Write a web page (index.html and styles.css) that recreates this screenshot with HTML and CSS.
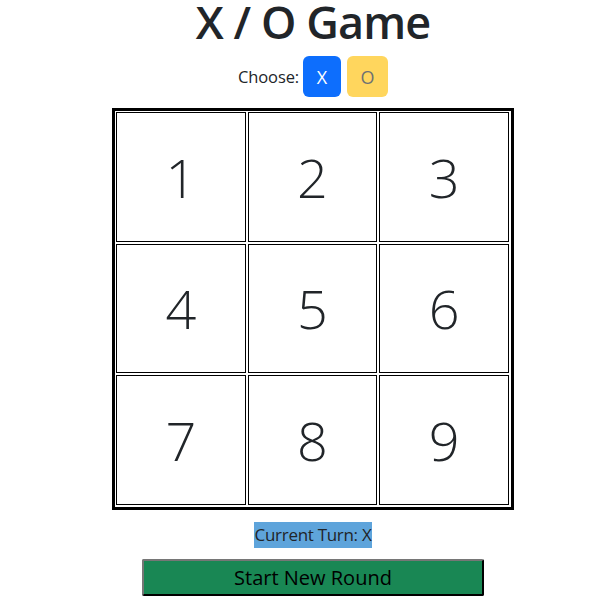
FILE: index.html
```html
<!DOCTYPE html>
<html lang="en">
<head>
<meta charset="utf-8">
<title>X / O Game</title>
<link rel="stylesheet" href="styles.css">
</head>
<body>
<main class="game">
  <h1 class="title">X / O Game</h1>
  <div class="choose">
    <span class="choose-label">Choose:</span>
    <button class="pick pick-x">X</button>
    <button class="pick pick-o" disabled>O</button>
  </div>
  <div class="board">
    <div class="cell">1</div>
    <div class="cell">2</div>
    <div class="cell">3</div>
    <div class="cell">4</div>
    <div class="cell">5</div>
    <div class="cell">6</div>
    <div class="cell">7</div>
    <div class="cell">8</div>
    <div class="cell">9</div>
  </div>
  <div class="turn"><span class="turn-text">Current Turn: X</span></div>
  <button class="restart">Start New Round</button>
</main>
</body>
</html>
```
FILE: styles.css
```css
html, body {
  margin: 0;
  padding: 0;
  background: #fff;
}
body {
  font-family: "Open Sans", "Noto Sans", sans-serif;
  color: #212529;
}
.game {
  display: flex;
  flex-direction: column;
  align-items: center;
  padding-left: 10px;
}
.title {
  margin: -3px 0 0;
  font-size: 45px;
  font-weight: 600;
  line-height: 50px;
  letter-spacing: -0.9px;
}
.choose {
  margin-top: 9px;
  display: flex;
  align-items: center;
  gap: 5px;
  font-size: 16.5px;
}
.choose-label {
  letter-spacing: -0.1px;
  margin-right: -1px;
}
.pick {
  font-family: inherit;
  font-size: 18px;
  height: 41px;
  border: none;
  border-radius: 6px;
  padding: 0;
}
.pick-x {
  width: 38px;
  background: #0d6efd;
  color: #fff;
}
.pick-o {
  width: 41px;
  margin-left: 1px;
  background: #ffc107;
  color: #212529;
  opacity: 0.65;
}
.board {
  margin-top: 11px;
  width: 402px;
  height: 402px;
  box-sizing: border-box;
  border: 3px solid #000;
  padding: 1px 2px 2px 1px;
  display: grid;
  grid-template-columns: repeat(3, 1fr);
  grid-template-rows: repeat(3, 1fr);
  gap: 2px;
}
.cell {
  border: 1px solid #000;
  display: flex;
  align-items: center;
  justify-content: center;
  font-size: 54px;
  font-weight: 350;
}
.turn {
  margin-top: 12px;
  font-size: 17px;
}
.turn-text {
  display: inline-block;
  background: #5ea4db;
  line-height: 26px;
  padding: 0 1px;
  letter-spacing: -0.3px;
}
.restart {
  margin-top: 11px;
  width: 342px;
  height: 37px;
  background: #198754;
  color: #000;
  font-family: inherit;
  font-size: 20px;
  border: 2px outset #767676;
  border-right-color: #000;
  border-bottom-color: #000;
  border-radius: 2px;
  padding: 0;
}
```
